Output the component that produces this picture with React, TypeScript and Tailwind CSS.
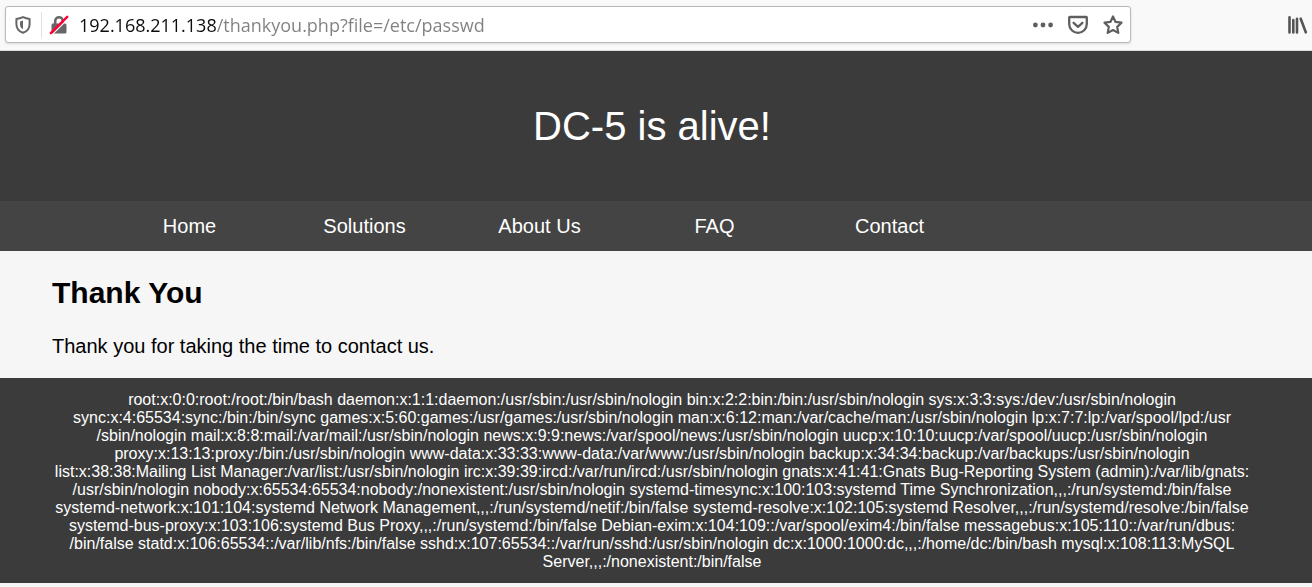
import { useState } from 'react';

const navItems = ['Home', 'Solutions', 'About Us', 'FAQ', 'Contact'];

const passwdLines = [
  'root:x:0:0:root:/root:/bin/bash daemon:x:1:1:daemon:/usr/sbin:/usr/sbin/nologin bin:x:2:2:bin:/bin:/usr/sbin/nologin sys:x:3:3:sys:/dev:/usr/sbin/nologin',
  'sync:x:4:65534:sync:/bin:/bin/sync games:x:5:60:games:/usr/games:/usr/sbin/nologin man:x:6:12:man:/var/cache/man:/usr/sbin/nologin lp:x:7:7:lp:/var/spool/lpd:/usr',
  '/sbin/nologin mail:x:8:8:mail:/var/mail:/usr/sbin/nologin news:x:9:9:news:/var/spool/news:/usr/sbin/nologin uucp:x:10:10:uucp:/var/spool/uucp:/usr/sbin/nologin',
  'proxy:x:13:13:proxy:/bin:/usr/sbin/nologin www-data:x:33:33:www-data:/var/www:/usr/sbin/nologin backup:x:34:34:backup:/var/backups:/usr/sbin/nologin',
  'list:x:38:38:Mailing List Manager:/var/list:/usr/sbin/nologin irc:x:39:39:ircd:/var/run/ircd:/usr/sbin/nologin gnats:x:41:41:Gnats Bug-Reporting System (admin):/var/lib/gnats:',
  '/usr/sbin/nologin nobody:x:65534:65534:nobody:/nonexistent:/usr/sbin/nologin systemd-timesync:x:100:103:systemd Time Synchronization,,,:/run/systemd:/bin/false',
  'systemd-network:x:101:104:systemd Network Management,,,:/run/systemd/netif:/bin/false systemd-resolve:x:102:105:systemd Resolver,,,:/run/systemd/resolve:/bin/false',
  'systemd-bus-proxy:x:103:106:systemd Bus Proxy,,,:/run/systemd:/bin/false Debian-exim:x:104:109::/var/spool/exim4:/bin/false messagebus:x:105:110::/var/run/dbus:',
  '/bin/false statd:x:106:65534::/var/lib/nfs:/bin/false sshd:x:107:65534::/var/run/sshd:/usr/sbin/nologin dc:x:1000:1000:dc,,,:/home/dc:/bin/bash mysql:x:108:113:MySQL',
  'Server,,,:/nonexistent:/bin/false',
];

function ShieldIcon() {
  return (
    <svg width="20" height="20" viewBox="0 0 20 20" fill="none" aria-hidden="true">
      <path d="M10 2.100C8 3 6 3.600 3.400 3.900v5c0 4.700 2.600 7.400 6.600 8.900 4-1.500 6.600-4.200 6.600-8.900v-5C14 3.600 12 3 10 2.100z" stroke="#666" strokeWidth="2" strokeLinejoin="round" />
      <path d="M10 5.600 7 6.600v2.600c0 2.200.9 3.900 3 5z" fill="#666" />
    </svg>
  );
}

function InsecureLockIcon() {
  return (
    <svg width="20" height="20" viewBox="0 0 20 20" fill="none" aria-hidden="true">
      <path d="M6.200 9.500V6a3.800 3.800 0 0 1 7.600 0v3.500" stroke="#666" strokeWidth="2.600" />
      <rect x="2.500" y="8.500" width="15" height="10" rx="1.500" fill="#666" />
      <path d="M3.400 19.400 19 3.800" stroke="#fff" strokeWidth="1.200" />
      <path d="M1.800 18.200 18.200 1.800" stroke="#ff0039" strokeWidth="2.400" strokeLinecap="round" />
    </svg>
  );
}

function DotsIcon() {
  return (
    <svg width="20" height="20" viewBox="0 0 20 20" fill="#5f5f5f" aria-hidden="true">
      <circle cx="2.400" cy="10" r="2.400" />
      <circle cx="10" cy="10" r="2.400" />
      <circle cx="17.600" cy="10" r="2.400" />
    </svg>
  );
}

function PocketIcon() {
  return (
    <svg width="20" height="20" viewBox="0 0 20 20" fill="none" stroke="#5f5f5f" strokeWidth="2.300" strokeLinecap="round" strokeLinejoin="round" aria-hidden="true">
      <path d="M1.800 2h16.400q.6 0 .6.600V9a8.800 8.800 0 0 1-17.600 0V2.600q0-.6.600-.6z" />
      <path d="m5.600 7.800 4.400 4.100 4.400-4.100" />
    </svg>
  );
}

function StarIcon() {
  return (
    <svg width="20" height="20" viewBox="0 0 20 20" fill="none" aria-hidden="true">
      <path d="m10 1.500 2.600 5.400 5.900.8-4.300 4.200 1.100 6-5.300-2.900-5.300 2.900 1.100-6L1.500 7.700l5.900-.8z" stroke="#5f5f5f" strokeWidth="2.200" strokeLinejoin="round" />
    </svg>
  );
}

function LibraryIcon() {
  return (
    <svg width="20" height="20" viewBox="0 0 20 20" fill="none" stroke="#555" strokeWidth="2.600" strokeLinecap="round" aria-hidden="true">
      <path d="M1.500 2.300v15.200M5.300 5v12.500M9 3.700v13.800M12.700 3.700l5.100 13.600" />
    </svg>
  );
}

function AddressBar() {
  const [url, setUrl] = useState('192.168.211.138/thankyou.php?file=/etc/passwd');
  return (
    <header className="flex h-[51px] items-start justify-between gap-4 border-b border-[#dcdcdc] bg-[#f9f9fa] pt-[6px] pr-1 pl-[5px]">
      <div className="flex h-[37px] w-[88%] max-w-[1126px] items-center rounded-[3px] border border-[#b8b8b8] bg-white px-[7px] shadow-sm">
        <button type="button" aria-label="Site protections"><ShieldIcon /></button>
        <span className="ml-2 h-[26px] w-px bg-[#e2e2e2]" />
        <button type="button" aria-label="Connection is not secure" className="ml-[7px]"><InsecureLockIcon /></button>
        <input
          aria-label="Address"
          value={url}
          onChange={(event) => setUrl(event.target.value)}
          spellCheck={false}
          className="ml-[6px] min-w-0 flex-1 bg-[linear-gradient(to_right,#0c0c0d_142px,#808080_142px)] bg-clip-text pt-[2px] pl-1 font-['Open_Sans',sans-serif] text-[18px] text-transparent caret-black outline-none"
        />
        <div className="flex gap-[15px]">
          <button type="button" aria-label="Page actions"><DotsIcon /></button>
          <button type="button" aria-label="Save to Pocket"><PocketIcon /></button>
          <button type="button" aria-label="Bookmark this page"><StarIcon /></button>
        </div>
      </div>
      <button type="button" aria-label="Library" className="mt-[9px]"><LibraryIcon /></button>
    </header>
  );
}

export default function App() {
  return (
    <div className="min-h-screen bg-[#f6f6f6] font-['Liberation_Sans',Arial,sans-serif] text-black">
      <AddressBar />
      <div className="bg-[#3b3b3b] pt-[51px] pr-[60px] pb-[51px] pl-[52px] text-center text-[40px] leading-[48px] text-white">
        DC-5 is alive!
      </div>
      <nav className="bg-[#444] px-[102px]">
        <ul className="flex text-[20px] leading-[50px] text-white">
          {navItems.map((item) => (
            <li key={item} className="w-[175px] text-center">
              <a href="#">{item}</a>
            </li>
          ))}
        </ul>
      </nav>
      <main className="pt-6 pr-[60px] pb-5 pl-[52px]">
        <h1 className="text-[30px] leading-9 font-bold">Thank You</h1>
        <p className="mt-[23px] text-[20px] leading-6">Thank you for taking the time to contact us.</p>
      </main>
      <footer className="bg-[#3b3b3b] pt-[13px] pr-[60px] pb-3 pl-[52px] text-center text-[16px] leading-[18px] text-white">
        {passwdLines.map((line) => (
          <span key={line} className="block">{line}</span>
        ))}
      </footer>
    </div>
  );
}
